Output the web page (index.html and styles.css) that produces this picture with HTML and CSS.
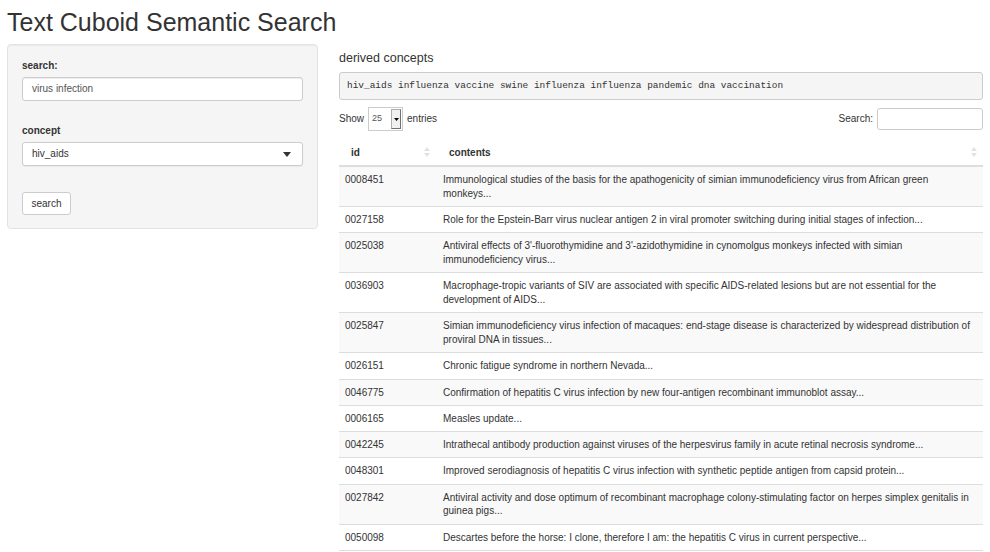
FILE: index.html
```html
<!DOCTYPE html>
<html>
<head>
<meta charset="utf-8">
<title>Text Cuboid Semantic Search</title>
<link rel="stylesheet" href="styles.css">
</head>
<body>
<div class="page">
  <h2 class="title">Text Cuboid Semantic Search</h2>
  <div class="layout">
    <aside class="sidebar">
      <div class="group">
        <div class="label">search:</div>
        <div class="field">virus infection</div>
      </div>
      <div class="group group-concept">
        <div class="label">concept</div>
        <div class="field field-select">
          <span>hiv_aids</span>
          <svg class="caret" width="8" height="5" viewBox="0 0 8 5"><path d="M0 0h8L4 5z" fill="#333"/></svg>
        </div>
      </div>
      <div class="btn">search</div>
    </aside>
    <main class="main">
      <h4 class="heading">derived concepts</h4>
      <pre class="concepts">hiv_aids influenza vaccine swine influenza influenza pandemic dna vaccination</pre>
      <div class="controls">
        <div class="length">
          <span>Show</span>
          <span class="mini-select"><span class="val">25</span><span class="arrow"><svg width="5" height="3" viewBox="0 0 5 3"><path d="M0 0h5L2.5 3z" fill="#000"/></svg></span></span>
          <span>entries</span>
        </div>
        <div class="filter">
          <span>Search:</span>
          <span class="search-box"></span>
        </div>
      </div>
      <table class="results">
        <thead>
          <tr>
            <th class="col-id">id<svg class="sort" width="6" height="10" viewBox="0 0 6 10"><path d="M3 0L6 4H0z M3 10L0 6h6z" fill="#e2e2e2"/></svg></th>
            <th>contents<svg class="sort" width="6" height="10" viewBox="0 0 6 10"><path d="M3 0L6 4H0z M3 10L0 6h6z" fill="#e2e2e2"/></svg></th>
          </tr>
        </thead>
        <tbody>
          <tr><td>0008451</td><td>Immunological studies of the basis for the apathogenicity of simian immunodeficiency virus from African green monkeys...</td></tr>
          <tr><td>0027158</td><td>Role for the Epstein-Barr virus nuclear antigen 2 in viral promoter switching during initial stages of infection...</td></tr>
          <tr><td>0025038</td><td>Antiviral effects of 3'-fluorothymidine and 3'-azidothymidine in cynomolgus monkeys infected with simian immunodeficiency virus...</td></tr>
          <tr><td>0036903</td><td>Macrophage-tropic variants of SIV are associated with specific AIDS-related lesions but are not essential for the development of AIDS...</td></tr>
          <tr><td>0025847</td><td>Simian immunodeficiency virus infection of macaques: end-stage disease is characterized by widespread distribution of proviral DNA in tissues...</td></tr>
          <tr><td>0026151</td><td>Chronic fatigue syndrome in northern Nevada...</td></tr>
          <tr><td>0046775</td><td>Confirmation of hepatitis C virus infection by new four-antigen recombinant immunoblot assay...</td></tr>
          <tr><td>0006165</td><td>Measles update...</td></tr>
          <tr><td>0042245</td><td>Intrathecal antibody production against viruses of the herpesvirus family in acute retinal necrosis syndrome...</td></tr>
          <tr><td>0048301</td><td>Improved serodiagnosis of hepatitis C virus infection with synthetic peptide antigen from capsid protein...</td></tr>
          <tr><td>0027842</td><td>Antiviral activity and dose optimum of recombinant macrophage colony-stimulating factor on herpes simplex genitalis in guinea pigs...</td></tr>
          <tr><td>0050098</td><td>Descartes before the horse: I clone, therefore I am: the hepatitis C virus in current perspective...</td></tr>
        </tbody>
      </table>
    </main>
  </div>
</div>
</body>
</html>
```

FILE: styles.css
```css
* { box-sizing: border-box; }
html, body { margin: 0; padding: 0; background: #fff; }
body {
  font-family: "Liberation Sans", Arial, sans-serif;
  font-size: 10px;
  line-height: 14px;
  color: #333;
}
.page { padding: 0 7px; }
.title {
  margin: 8px 0 0;
  font-size: 25px;
  line-height: 28px;
  font-weight: normal;
  color: #333;
}
.layout {
  display: flex;
  align-items: flex-start;
  gap: 21px;
  margin-top: 8px;
}
.sidebar {
  width: 311px;
  flex: none;
  background: #f5f5f5;
  border: 1px solid #e3e3e3;
  border-radius: 4px;
  box-shadow: inset 0 1px 1px rgba(0,0,0,0.05);
  padding: 14px 14px 13px 14px;
}
.label { font-weight: bold; margin-bottom: 4px; }
.field {
  height: 24px;
  background: #fff;
  border: 1px solid #ccc;
  border-radius: 3px;
  box-shadow: inset 0 1px 1px rgba(0,0,0,0.075);
  padding: 0 9px;
  display: flex;
  align-items: center;
  color: #555;
}
.group-concept { margin-top: 23px; }
.field-select {
  justify-content: space-between;
  color: #333;
  box-shadow: 0 1px 1px rgba(0,0,0,0.05);
  padding-right: 11px;
}
.caret { display: block; }
.btn {
  margin-top: 26px;
  width: 49px;
  height: 23px;
  background: #fff;
  border: 1px solid #ccc;
  border-radius: 3px;
  display: flex;
  align-items: center;
  justify-content: center;
  color: #333;
}
.main { flex: 1; min-width: 0; margin-top: 7px; }
.heading {
  margin: 0;
  font-size: 12.5px;
  line-height: 14px;
  font-weight: normal;
  color: #333;
}
.concepts {
  margin: 7px 0 0;
  height: 28px;
  padding: 0 7px;
  background: #f5f5f5;
  border: 1px solid #ccc;
  border-radius: 3px;
  font-family: "Liberation Mono", "Courier New", monospace;
  font-size: 9.45px;
  line-height: 26px;
  color: #333;
}
.controls {
  display: flex;
  justify-content: space-between;
  align-items: center;
  margin-top: 7px;
  height: 24px;
}
.length, .filter { display: flex; align-items: center; gap: 4px; }
.mini-select {
  display: flex;
  width: 35px;
  height: 24px;
  border: 1px solid #ccc;
  background: #fff;
}
.mini-select .val {
  flex: 1;
  font-size: 9px;
  padding: 3px 0 0 3px;
  color: #555;
}
.mini-select .arrow {
  width: 10px;
  margin: 1px 1px 1px 0;
  background: #f0f0f0;
  border: 1px solid #adadad;
  border-right-color: #707070;
  border-bottom-color: #707070;
  display: flex;
  align-items: center;
  justify-content: center;
}
.search-box {
  width: 106px;
  height: 22px;
  border: 1px solid #ccc;
  border-radius: 3px;
  background: #fff;
}
.results {
  width: 100%;
  margin-top: 8px;
  border-collapse: collapse;
  table-layout: fixed;
}
.results th {
  text-align: left;
  font-weight: bold;
  padding: 7px 8px 5px 13px;
  border-bottom: 2px solid #ddd;
  position: relative;
}
.results th.col-id { width: 97px; padding-left: 12px; }
.results th .sort { position: absolute; right: 6px; top: 8px; }
.results td {
  padding: 6px 8px 5.6px 7px;
  border-top: 1px solid #ddd;
  vertical-align: top;
  line-height: 13.7px;
}
.results td:first-child { padding-left: 6px; }
.results tbody tr:nth-child(odd) { background: #f9f9f9; }
.results tbody tr:last-child td { border-bottom: 1px solid #ddd; }
```
